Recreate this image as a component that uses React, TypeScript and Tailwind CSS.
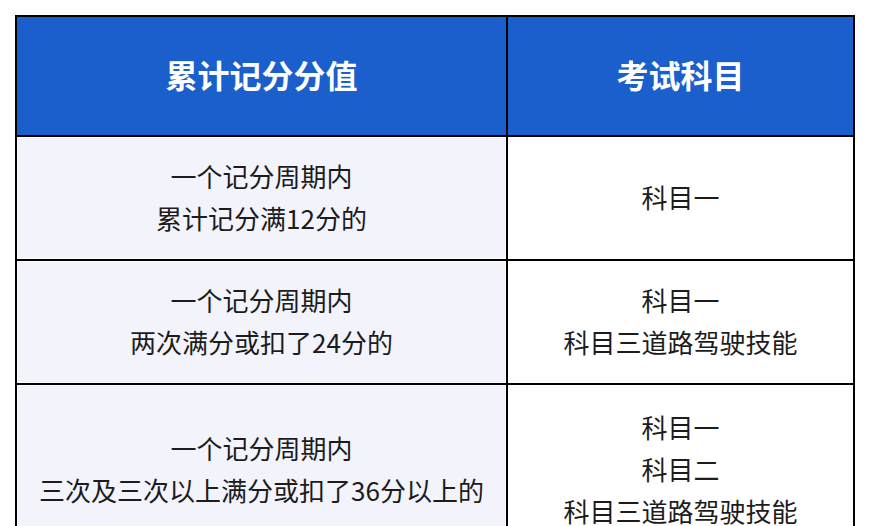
import React from 'react';

const rows: { left: string[]; right: string[]; h: string }[] = [
  { left: ['一个记分周期内', '累计记分满12分的'], right: ['科目一'], h: 'h-[122px]' },
  { left: ['一个记分周期内', '两次满分或扣了24分的'], right: ['科目一', '科目三道路驾驶技能'], h: 'h-[122px]' },
  {
    left: ['一个记分周期内', '三次及三次以上满分或扣了36分以上的'],
    right: ['科目一', '科目二', '科目三道路驾驶技能'],
    h: 'h-[170px]',
  },
];

export default function App() {
  return (
    <div className="w-[870px] h-[526px] overflow-hidden bg-white pt-[15px] pl-[15px] font-['Noto_Sans_CJK_SC','Microsoft_YaHei',sans-serif]">
      <div className="w-[840px] border-2 border-black bg-black grid grid-cols-[489px_345px] gap-[2px]">
        {/* Header */}
        <div className="h-[118px] bg-[#1a5fcc] flex items-center justify-center pb-[4px] text-white text-[32px] font-bold">
          累计记分分值
        </div>
        <div className="h-[118px] bg-[#1a5fcc] flex items-center justify-center pb-[4px] text-white text-[32px] font-bold">
          考试科目
        </div>

        {rows.map((r, i) => (
          <React.Fragment key={i}>
            <div className={`${r.h} bg-[#f3f3fb] border border-white flex flex-col items-center justify-center pb-[2px] text-[26px] leading-[42px] text-[#1c1c1c]`}>
              {r.left.map((t) => (
                <div key={t}>{t}</div>
              ))}
            </div>
            <div className={`${r.h} bg-white flex flex-col items-center justify-center pb-[2px] text-[26px] leading-[42px] text-[#1c1c1c]`}>
              {r.right.map((t) => (
                <div key={t}>{t}</div>
              ))}
            </div>
          </React.Fragment>
        ))}
      </div>
    </div>
  );
}
